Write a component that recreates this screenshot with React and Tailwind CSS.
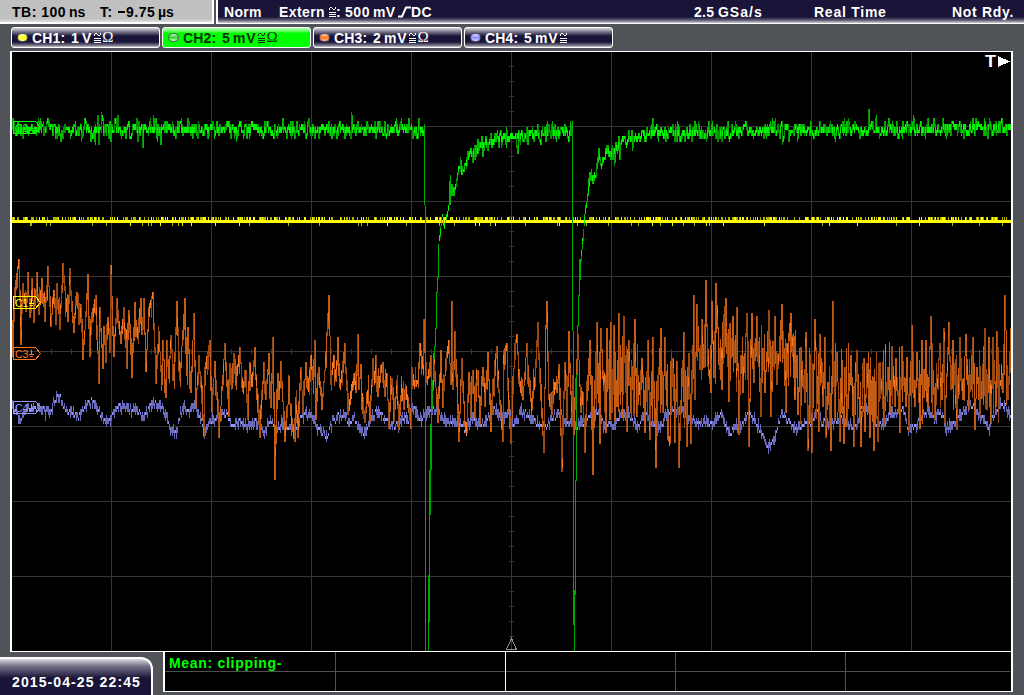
const FONT = "font-['Liberation_Sans',Arial,sans-serif]"

// small seeded generator so the traces are stable between renders
function makeRandom(seed) {
  let s = seed
  return () => {
    s = (s * 1664525 + 1013904223) % 4294967296
    return s / 4294967296
  }
}

// flat list of x, y, x, y ...
const C3_POINTS = [
  12, 325, 13, 357, 15, 287, 19, 259, 21, 345, 23, 283, 26, 312, 28, 272, 30, 318, 32, 278, 34, 323, 37, 272, 39, 315,
  42, 278, 45, 322, 48, 266, 51, 327, 54, 290, 56, 325, 57, 283, 60, 330, 63, 263, 66, 298, 68, 322, 70, 268, 72, 312,
  74, 333, 77, 292, 79, 325, 81, 304, 83, 360, 85, 330, 88, 274, 90, 357, 92, 312, 96, 295, 99, 384, 100, 307, 103, 369,
  104, 326, 106, 363, 108, 317, 110, 353, 111, 265, 114, 357, 117, 298, 121, 344, 124, 307, 127, 369, 129, 310, 132, 378,
  135, 302, 137, 337, 141, 298, 142, 335, 144, 298, 146, 372, 149, 307, 153, 292, 156, 384, 159, 340, 162, 377, 163, 340,
  166, 398, 167, 340, 169, 377, 171, 335, 174, 378, 177, 301, 180, 378, 185, 298, 187, 376, 188, 327, 191, 393, 194, 313,
  196, 407, 199, 355, 204, 437, 205, 367, 210, 340, 212, 412, 215, 361, 219, 438, 225, 343, 229, 417, 230, 363, 232, 373,
  234, 353, 237, 372, 240, 347, 243, 392, 245, 370, 248, 420, 250, 362, 252, 385, 255, 347, 257, 400, 260, 438, 264, 362, 266, 400,
  269, 353, 271, 408, 273, 337, 275, 480, 278, 373, 279, 400, 281, 361, 285, 442, 289, 393, 292, 427, 295, 442, 296, 407,
  298, 438, 301, 367, 303, 413, 306, 362, 308, 390, 311, 355, 313, 377, 315, 340, 316, 420, 319, 367, 322, 410, 325, 370,
  328, 313, 329, 295, 331, 377, 334, 355, 336, 382, 338, 337, 340, 388, 345, 343, 348, 415, 351, 397, 354, 373, 356, 393,
  358, 334, 359, 390, 361, 364, 362, 410, 365, 423, 368, 392, 370, 422, 373, 358, 375, 383, 376, 355, 378, 397, 381, 365,
  383, 362, 385, 397, 387, 373, 389, 429, 392, 378, 394, 422, 397, 387, 399, 430, 402, 388, 404, 410, 406, 390, 411, 429,
  412, 367, 415, 387, 418, 380, 420, 343, 423, 363, 424, 319, 427, 383, 431, 355, 432, 407, 434, 353, 438, 423, 441, 350,
  443, 408, 446, 358, 449, 340, 451, 385, 452, 301, 453, 390, 455, 331, 459, 442, 462, 358, 465, 427, 467, 433, 469, 372,
  471, 418, 473, 370, 475, 418, 478, 370, 480, 425, 483, 367, 485, 407, 488, 352, 491, 432, 495, 360, 497, 346, 499, 393,
  503, 442, 504, 350, 507, 343, 509, 413, 511, 444, 515, 343, 517, 334, 520, 387, 523, 400, 527, 343, 529, 387, 532, 410,
  535, 377, 538, 322, 540, 383, 544, 453, 546, 325, 547, 301, 549, 400, 552, 415, 555, 382, 557, 393, 559, 364, 562, 472,
  565, 362, 567, 420, 569, 331, 572, 427, 573, 383, 574, 435, 578, 334, 581, 413, 583, 393, 585, 453, 588, 375, 590, 340,
  593, 475, 595, 380, 597, 322, 600, 444, 601, 328, 606, 433, 607, 328, 610, 420, 611, 322, 612, 413, 614, 325, 617, 407,
  619, 313, 621, 377, 624, 316, 627, 432, 629, 340, 631, 413, 635, 319, 637, 417, 642, 358, 645, 433, 648, 340, 650, 440,
  653, 337, 656, 468, 659, 367, 661, 328, 663, 413, 665, 337, 668, 440, 670, 444, 673, 358, 675, 443, 677, 361, 679, 468,
  682, 387, 684, 332, 687, 447, 689, 353, 691, 444, 694, 295, 695, 400, 697, 304, 700, 370, 702, 319, 704, 368, 706, 280,
  708, 367, 711, 393, 712, 301, 714, 378, 716, 283, 720, 370, 722, 390, 723, 322, 726, 298, 729, 402, 733, 316, 735, 363,
  737, 307, 739, 435, 741, 355, 743, 393, 747, 313, 749, 447, 752, 313, 754, 383, 757, 316, 761, 417, 763, 348, 765, 393,
  769, 310, 771, 417, 775, 316, 777, 385, 782, 304, 786, 413, 788, 343, 791, 313, 795, 400, 797, 355, 798, 415, 801, 347,
  805, 403, 806, 332, 808, 451, 810, 393, 812, 453, 815, 319, 819, 432, 820, 334, 823, 407, 825, 337, 826, 438, 828, 382,
  831, 451, 833, 301, 835, 420, 837, 352, 840, 442, 842, 383, 844, 444, 845, 367, 847, 427, 851, 355, 854, 447, 857, 350,
  861, 447, 864, 358, 865, 432, 867, 363, 870, 438, 872, 392, 874, 451, 876, 395, 878, 442, 880, 362, 884, 425, 888, 367,
  890, 413, 892, 346, 895, 407, 896, 358, 900, 433, 902, 346, 906, 407, 907, 357, 909, 432, 912, 325, 915, 407, 917, 352,
  920, 429, 922, 340, 924, 398, 926, 340, 928, 407, 931, 316, 933, 370, 935, 420, 940, 343, 942, 400, 944, 328, 945, 423,
  949, 322, 951, 390, 953, 340, 957, 430, 960, 337, 963, 400, 966, 334, 969, 410, 973, 337, 975, 430, 977, 367, 980, 417,
  985, 328, 987, 410, 989, 337, 991, 423, 993, 337, 996, 407, 997, 331, 1000, 380, 1003, 393, 1005, 295, 1008, 400, 1011, 328,
]

const C4_POINTS = [
  12, 405, 16, 412, 19, 422, 22, 412, 28, 406, 40, 409, 50, 411, 55, 397, 60, 396, 65, 410, 70, 412, 78, 416, 84, 406,
  92, 401, 97, 408, 103, 418, 108, 421, 114, 410, 124, 404, 130, 408, 137, 410, 142, 418, 148, 408, 154, 402, 160, 405,
  166, 416, 170, 428, 176, 430, 180, 412, 184, 405, 188, 412, 194, 404, 200, 416, 204, 434, 208, 424, 214, 418, 220, 412,
  226, 412, 231, 424, 240, 422, 248, 424, 256, 420, 259, 423, 264, 432, 270, 418, 277, 427, 282, 423, 290, 428, 295, 428,
  299, 422, 302, 414, 310, 413, 316, 426, 326, 436, 333, 418, 338, 416, 344, 414, 348, 422, 354, 417, 359, 428, 364, 433,
  370, 420, 377, 410, 384, 416, 390, 424, 398, 424, 402, 416, 408, 418, 413, 408, 420, 418, 427, 410, 434, 408, 440, 413,
  445, 420, 453, 422, 460, 422, 466, 430, 472, 416, 480, 425, 486, 420, 494, 408, 502, 418, 508, 412, 513, 427, 520, 411,
  528, 414, 536, 422, 546, 425, 552, 416, 560, 413, 566, 420, 576, 425, 586, 420, 592, 409, 598, 414, 604, 424, 614, 424,
  620, 412, 628, 414, 632, 418, 639, 427, 644, 411, 650, 418, 658, 428, 668, 412, 676, 411, 682, 409, 688, 416, 700, 422,
  712, 422, 718, 416, 722, 415, 726, 428, 730, 432, 734, 426, 742, 425, 748, 409, 756, 422, 764, 438, 768, 447, 774, 438,
  781, 411, 788, 420, 796, 430, 802, 422, 810, 424, 816, 409, 822, 422, 832, 422, 840, 416, 846, 424, 856, 426, 862, 406,
  868, 407, 876, 424, 884, 422, 890, 413, 896, 412, 902, 407, 908, 428, 916, 424, 922, 414, 928, 409, 934, 418, 940, 409,
  946, 427, 956, 420, 962, 411, 970, 403, 976, 412, 982, 417, 988, 428, 994, 412, 1002, 402, 1006, 407, 1011, 420,
]

const C2_BEFORE = [12, 129, 424, 128]
const C2_FIRST = [
  438, 257, 442, 213, 444, 228, 449, 201, 452, 184, 455, 193, 459, 164, 462, 171, 465, 166, 470, 151, 474, 153, 478, 149,
  485, 142, 497, 138, 507, 137, 533, 135, 553, 131, 572, 131,
]
const C2_SECOND = [
  580, 270, 583, 235, 585, 213, 587, 197, 590, 180, 593, 178, 597, 166, 599, 154, 602, 165, 607, 149, 611, 153, 617, 146,
  625, 139, 633, 137, 647, 134, 660, 132, 700, 132, 750, 130, 870, 128, 1011, 127,
]

function valueAt(points, x) {
  let i = 0
  while (i < points.length - 4 && points[i + 2] <= x) i += 2
  const [x0, y0, x1, y1] = points.slice(i, i + 4)
  const t = Math.min(1, Math.max(0, (x - x0) / (x1 - x0)))
  return y0 + (y1 - y0) * t
}

const bar = (x, top, bottom) => `M${x} ${Math.round(top)}h1V${Math.round(Math.max(bottom, top + 2))}h-1z`

// the vertical resolution of the scope is three pixels
const step = (y) => Math.round(y / 3) * 3 + 1

function buildC3() {
  const rnd = makeRandom(77)
  const out = { bright: "", mid: "", dark: "" }
  for (let x = 12; x < 1011; x++) {
    const a = valueAt(C3_POINTS, x)
    const b = valueAt(C3_POINTS, x + 1)
    let top = Math.min(a, b)
    let bottom = Math.max(a, b)
    // widen towards the middle of the band only, peaks keep their height
    const centre = x < 80 ? 300 : x < 160 ? 330 : x > 690 && x < 800 ? 355 : 382
    const reach = (x > 590 ? 75 : 20) * rnd()
    const limit = 5 + rnd() * (x > 590 ? 42 : 15)
    if (top > centre) top = Math.max(top - reach, centre - limit)
    else if (bottom < centre) bottom = Math.min(bottom + reach, centre + limit)
    const len = bottom - top
    if (len < 13) out.bright += bar(x, top, bottom + 2)
    else {
      out[rnd() < 0.6 ? "mid" : "dark"] += bar(x, top, bottom)
      if (rnd() < 0.16) {
        const at = top + rnd() * (len - 10)
        out.bright += bar(x, at, at + 9)
      }
    }
  }
  return out
}

function buildC4() {
  const rnd = makeRandom(5)
  const out = { bright: "", dark: "" }
  for (let x = 12; x < 1011; x++) {
    const y = valueAt(C4_POINTS, x) + (rnd() - 0.5) * 6
    const len = 3 + Math.floor(rnd() * 3.4) * 3
    const top = step(y - len / 2)
    out[len < 6 ? "bright" : "dark"] += bar(x, top, top + len)
  }
  return out
}

function buildC2() {
  const rnd = makeRandom(31)
  const out = { bright: "", dark: "", mid: "" }
  const noisy = (points) => {
    const end = points[points.length - 2]
    let prev = 0
    for (let x = points[0]; x < end; x++) {
      const centre = valueAt(points, x + 0.5)
      const spike = rnd() < 0.05 ? (rnd() < 0.6 ? -9 : 9) : 0
      const next = (rnd() + rnd() - 1) * 10 + spike
      const top = step(centre + Math.min(prev, next) - 2.5 * rnd() - 1)
      const bottom = step(centre + Math.max(prev, next) + 2.5 * rnd() + 1)
      const len = bottom - top
      if (len < 8) out.bright += bar(x, top, bottom)
      else {
        out[rnd() < 0.6 ? "mid" : "dark"] += bar(x, top, bottom)
        if (rnd() < 0.45) {
          const at = step(centre - 3)
          out.bright += bar(x, at, at + 6)
        }
      }
      prev = next
    }
  }
  noisy(C2_BEFORE)
  noisy(C2_FIRST)
  noisy(C2_SECOND)
  return out
}

function buildC1() {
  const rnd = makeRandom(12)
  const out = { bright: "M12 220h999v3h-999z", dark: "" }
  for (let x = 12; x < 1011; x++) {
    const r = rnd()
    if (r < 0.2) out.bright += bar(x, 217, 220)
    else if (r < 0.48) out.dark += bar(x, 217, 220)
    if (rnd() < 0.06) out[rnd() < 0.4 ? "bright" : "dark"] += bar(x, 223, 226)
  }
  return out
}

const c1 = buildC1()
const c2 = buildC2()
const c3 = buildC3()
const c4 = buildC4()

// clipped pulses: falling edge and the steep part of the recovery
const C2_EDGES =
  "M424 124h1V205h-1zM425 205h1V651h-1zM428 575h1V651h-1zM429 470h1V622h-1zM430 424h1V515h-1zM431 408h1V470h-1z" +
  "M432 380h1V409h-1zM433 358h1V381h-1zM434 346h1V359h-1zM435 328h1V347h-1zM436 292h1V329h-1zM437 277h1V293h-1zM438 253h1V278h-1z" +
  "M572 121h1V331h-1zM573 331h1V625h-1zM574 590h1V651h-1zM575 480h1V595h-1zM576 374h1V481h-1zM577 325h1V375h-1zM578 295h1V326h-1z" +
  "M579 259h1V296h-1zM580 259h1V280h-1z"

function Grid() {
  const cols = [111, 211, 311, 411, 511, 611, 711, 811, 911]
  const rows = [126, 201, 276, 351, 426, 501, 576]
  let d = ""
  cols.forEach((x) => (d += `M${x} 52h1V651h-1z`))
  rows.forEach((y) => (d += `M12 ${y}h999v1h-999z`))
  for (let y = 66; y < 645; y += 15) d += `M509 ${y}h5v1h-5z`
  for (let x = 31; x < 1005; x += 20) d += `M${x} 349h1v5h-1z`
  return <path d={d} fill="#363636" />
}

function Marker({ y, name, color }) {
  return (
    <g stroke={color} fill="none">
      <path d={`M13.5 ${y - 6}H35.5L40.5 ${y}L35.5 ${y + 6}H13.5Z`} />
      <path d={`M31.5 ${y - 4}V${y + 1}M29 ${y + 1}H34M30 ${y + 3}H33`} />
      <text x="15" y={y + 4} fontSize="10.5" fontWeight="normal" fill={color} stroke="none" fontFamily="Liberation Sans">
        {name}
      </text>
    </g>
  )
}

function Screen() {
  return (
    <svg className="block h-[599px] w-[999px]" viewBox="12 52 999 599" shapeRendering="crispEdges">
      <Grid />
      <path d={c4.dark} fill="#6a6abc" />
      <path d={c4.bright} fill="#9494fa" />
      <path d={c3.dark} fill="#9c4812" />
      <path d={c3.mid} fill="#c65c14" />
      <path d={c3.bright} fill="#fa7620" />
      <path d={c1.dark} fill="#b4b400" />
      <path d={c1.bright} fill="#ffff00" />
      <path d={C2_EDGES} fill="#00a800" />
      <path d={c2.dark} fill="#009000" />
      <path d={c2.mid} fill="#00b800" />
      <path d={c2.bright} fill="#00f400" />
      <Marker y={127.5} name="C2" color="#00ff00" />
      <Marker y={302.5} name="C1" color="#ffff00" />
      <Marker y={353.5} name="C3" color="#ff7820" />
      <Marker y={407.5} name="C4" color="#9898ff" />
      <path d="M506.5 649.5L511.5 638.5L516.5 649.5Z" fill="none" stroke="#909090" />
      <text x="985" y="67" fontSize="16" fontWeight="bold" fill="#fff" fontFamily="Liberation Sans" textLength="11" lengthAdjust="spacingAndGlyphs">
        T
      </text>
      <path d="M998 56L1010 61.5L998 67Z" fill="#fff" />
    </svg>
  )
}

function Coupling({ ohm }) {
  return (
    <span className="flex items-center font-normal">
      <svg className="ml-[2px] h-[11px] w-[7px]" viewBox="0 0 7 11" fill="none" stroke="currentColor" strokeWidth="1" shapeRendering="crispEdges">
        <path d="M0.5 4V2M1 1.5H3M3 2.5H4M4 3.5H6M6.5 3V1M0 6.5H7M0 8.5H7M0 10.5H7" />
      </svg>
      {ohm && <span className="ml-px font-['Liberation_Serif',serif] text-[15px] leading-none tracking-normal">Ω</span>}
    </span>
  )
}

const channels = [
  { name: "CH1:", value: "1", unit: "V", ohm: true, led: "bg-linear-to-b from-[#ffffa0] via-[#ffff00] to-[#ffff70]" },
  { name: "CH2:", value: "5", unit: "mV", ohm: true, active: true, led: "bg-linear-to-b from-[#b0ffb0] via-[#30d030] to-[#c0ffc0]" },
  { name: "CH3:", value: "2", unit: "mV", ohm: true, led: "bg-linear-to-b from-[#ffc8a0] via-[#ff7820] to-[#ffb080]" },
  { name: "CH4:", value: "5", unit: "mV", ohm: false, led: "bg-linear-to-b from-[#d8d8ff] via-[#9090ff] to-[#d0d0ff]" },
]

function ChannelButton({ channel }) {
  const look = channel.active
    ? "bg-linear-to-b from-[#b0ffb0] via-[#00ff00] via-25% to-[#00ff00] text-[#083008]"
    : "bg-[linear-gradient(#d8d8dc_0px,#8c8a98_3px,#1a1538_8px,#1a1538_14px,#8c8a98_18px,#d8d8dc_19px)] text-white"
  return (
    <div className={`flex h-[21px] w-[149px] items-center rounded-[3px] border border-white pl-[5px] ${look}`}>
      <span className={`h-[9px] w-[11px] rounded-full border border-[#50506a] ${channel.led}`} />
      <span className="ml-[4px] w-[39px] tracking-[0.2px]">{channel.name}</span>
      <span className="w-[11px]">{channel.value}</span>
      <span className="tracking-[0.8px]">{channel.unit}</span>
      <Coupling ohm={channel.ohm} />
    </div>
  )
}

function TopBar() {
  return (
    <div className="flex h-6 justify-between">
      <div className="flex h-6 w-[214px] items-center border-r-2 border-b-2 border-white bg-linear-to-b from-[#c0c0c0] from-85% to-[#e0e0e0] pt-[2px] pl-3 text-black">
        <span className="w-[57px] tracking-[0.5px]">TB: 100</span>
        <span className="w-[31px]">ns</span>
        <span className="w-[18px] tracking-[0.5px]">T:</span>
        <span className="flex w-10 items-center tracking-[0.5px]">
          <i className="mr-px h-[2px] w-[7px] bg-black" />
          9.75
        </span>
        <span>µs</span>
      </div>
      <div className="flex h-6 w-[808px] items-center border-b border-l-2 border-white bg-[linear-gradient(#1a1538_17px,#5c5870_20px,#d0d0d8_23px)] pl-[6px] text-white">
        <span className="w-[55px] tracking-[0.3px]">Norm</span>
        <span className="mr-[2px] tracking-[0.4px]">Extern</span>
        <Coupling />
        <span className="w-[9px]">:</span>
        <span className="w-[28px] tracking-[0.6px]">500</span>
        <span className="w-[25px] tracking-[0.4px]">mV</span>
        <svg className="h-3 w-[13px]" viewBox="0 0 13 12" fill="none" stroke="white" strokeWidth="2">
          <path d="M0 10.5H4L8 1.5H13" />
        </svg>
        <span className="w-[283px] tracking-[0.4px]">DC</span>
        <span className="w-[24px] tracking-[0.3px]">2.5</span>
        <span className="w-[96px] tracking-[1px]">GSa/s</span>
        <span className="w-[138px] whitespace-nowrap tracking-[0.75px]">Real Time</span>
        <span className="whitespace-nowrap tracking-[0.7px]">Not Rdy.</span>
      </div>
    </div>
  )
}

function Measurements() {
  const cells = [
    "w-[171px] border-r-[#505050]",
    "w-[170px] border-r-white",
    "w-[170px] border-r-[#505050]",
    "w-[170px] border-r-[#505050]",
    "w-[165px] border-r-black",
  ]
  return (
    <div className="ml-[10px] flex h-10 w-[850px] border-x-2 border-b border-white bg-black">
      {cells.map((cell, i) => (
        <div key={i} className={`flex flex-col border-r ${cell}`}>
          <div className="flex h-5 items-center border-b border-[#505050] pt-[2px] pl-1 whitespace-nowrap text-[#00ff00]">
            {i === 0 && <span className="tracking-[0.7px]">Mean: clipping-</span>}
          </div>
        </div>
      ))}
    </div>
  )
}

export default function App() {
  return (
    <div className={`flex h-[695px] w-[1024px] flex-col overflow-hidden bg-[#505458] text-[14px] leading-none font-bold ${FONT}`}>
      <TopBar />
      <div className="mt-[3px] ml-[11px] flex gap-[2px]">
        {channels.map((channel) => (
          <ChannelButton key={channel.name} channel={channel} />
        ))}
      </div>
      <div className="mt-[3px] ml-[10px] h-[601px] w-[1003px] shrink-0 border-x-2 border-y border-white bg-black">
        <Screen />
      </div>
      <div className="flex h-[43px] shrink-0">
        <div className="mt-[5px] flex h-[38px] w-[153px] items-center rounded-tr-[12px] border-t-2 border-r-2 border-white bg-[linear-gradient(#dcdce0,#77748a_7px,#1a1538_19px)] pt-[10px] pl-3 whitespace-nowrap text-white">
          <span className="tracking-[1.1px]">2015-04-25 22:45</span>
        </div>
        <Measurements />
      </div>
    </div>
  )
}
